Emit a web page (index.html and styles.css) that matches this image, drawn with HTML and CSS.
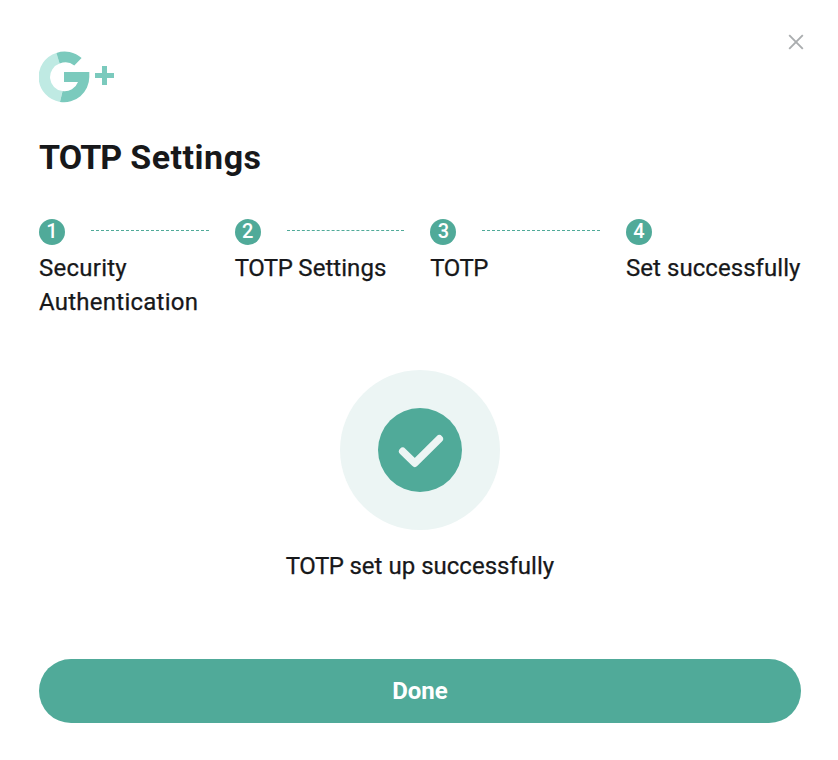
FILE: index.html
```html
<!DOCTYPE html>
<html lang="en">
<head>
    <meta charset="UTF-8">
    <meta name="viewport" content="width=device-width, initial-scale=1.0">
    <title>TOTP Settings</title>
    <link rel="stylesheet" href="styles.css">
</head>
<body>
    <main class="dialog">
        <button class="close" aria-label="Close">
            <svg width="16" height="16" viewBox="0 0 16 16">
                <path d="M1.2 1.2 14.8 14.8M14.8 1.2 1.2 14.8"/>
            </svg>
        </button>

        <!-- Logo -->
        <svg class="logo" width="76" height="52" viewBox="0 0 76 52" role="img" aria-label="G+">
            <path class="logo-light" d="M17.4 1.9A25.2 25.2 0 0 0 21 50.9L23.4 40.1A14.2 14.2 0 0 1 20.6 12.6Z"/>
            <path class="logo-dark" d="M17.4 1.9A25.2 25.2 0 0 1 42.6 7L35.3 14.4A14.2 14.2 0 0 0 20.6 12.6Z"/>
            <path class="logo-dark" d="M25 21H50.3V26A25.2 25.2 0 0 1 21 50.9L23.6 40.1A14.2 14.2 0 0 0 39 31H25Z"/>
            <path class="logo-dark" d="M63 15h5v7h7v5h-7v7h-5v-7h-7v-5h7z"/>
        </svg>

        <h1 class="title"><span class="title-totp">TOTP</span> Settings</h1>

        <!-- Steps -->
        <ol class="steps">
            <li class="step">
                <div class="step-head"><span class="step-number">1</span><span class="step-line"></span></div>
                <p class="step-label label-security">Security<br>Authentication</p>
            </li>
            <li class="step">
                <div class="step-head"><span class="step-number">2</span><span class="step-line"></span></div>
                <p class="step-label"><span class="totp">TOTP</span> Settings</p>
            </li>
            <li class="step">
                <div class="step-head"><span class="step-number">3</span><span class="step-line"></span></div>
                <p class="step-label"><span class="totp">TOTP</span></p>
            </li>
            <li class="step">
                <div class="step-head"><span class="step-number">4</span></div>
                <p class="step-label">Set successfully</p>
            </li>
        </ol>

        <!-- Result -->
        <section class="result">
            <div class="result-halo">
                <div class="result-icon">
                    <svg width="84" height="84" viewBox="0 0 84 84">
                        <path d="M24.7 43.3 36.8 55.2 61.3 30.8"/>
                    </svg>
                </div>
            </div>
            <p class="result-text"><span class="totp">TOTP</span> set up successfully</p>
        </section>

        <button class="done">Done</button>
    </main>
</body>
</html>
```

FILE: styles.css
```css
:root {
    --green: #50aa99;
    --green-pale: #ecf5f4;
    --text: #17181a;
}

* {
    margin: 0;
    padding: 0;
    box-sizing: border-box;
}

body {
    background: #fff;
    color: var(--text);
    font-family: Roboto, "Liberation Sans", sans-serif;
}

.dialog {
    position: relative;
    width: 838px;
    height: 760px;
    padding: 51px 37px 37px 39px;
    display: flex;
    flex-direction: column;
}

button {
    border: none;
    font-family: inherit;
    cursor: pointer;
}

/* Close */
.close {
    position: absolute;
    top: 34px;
    right: 34px;
    width: 16px;
    height: 16px;
    background: none;
}

.close svg {
    display: block;
    fill: none;
    stroke: #aaadaf;
    stroke-width: 1.9;
}

/* Logo and title */
.logo-light {
    fill: #bfeae3;
}

.logo-dark {
    fill: #7bcabd;
}

.title {
    margin-top: 30px;
    font-size: 34px;
    line-height: 48px;
    font-weight: 700;
    letter-spacing: 0.5px;
    white-space: nowrap;
}

.title-totp {
    letter-spacing: -0.9px;
}

/* Steps */
.steps {
    display: flex;
    margin-top: 38px;
    list-style: none;
}

.step {
    flex: 1;
}

.step:last-child {
    flex: 0 0 175px;
}

.step-head {
    display: flex;
    height: 26px;
}

.step-number {
    width: 26px;
    height: 26px;
    border-radius: 50%;
    background: var(--green);
    color: #fff;
    font-size: 20px;
    line-height: 25px;
    font-weight: 500;
    text-align: center;
}

.step-line {
    flex: 1;
    height: 1px;
    margin: 11px 26px 0;
    border-top: 1px dashed var(--green);
}

.step-label {
    margin-top: 6px;
    font-size: 24px;
    line-height: 34px;
    letter-spacing: 0.05px;
    white-space: nowrap;
    -webkit-text-stroke: 0.25px var(--text);
}

.label-security {
    letter-spacing: 0.25px;
}

.totp {
    letter-spacing: -0.5px;
}

/* Result */
.result {
    display: flex;
    flex-direction: column;
    align-items: center;
    margin-top: 51px;
}

.result-halo {
    display: flex;
    align-items: center;
    justify-content: center;
    width: 160px;
    height: 160px;
    border-radius: 50%;
    background: var(--green-pale);
}

.result-icon {
    width: 84px;
    height: 84px;
    border-radius: 50%;
    background: var(--green);
}

.result-icon svg {
    display: block;
    fill: none;
    stroke: var(--green-pale);
    stroke-width: 7.5;
    stroke-linecap: round;
    stroke-linejoin: round;
}

.result-text {
    margin-top: 19px;
    font-size: 24px;
    line-height: 34px;
    letter-spacing: 0.02px;
    -webkit-text-stroke: 0.25px var(--text);
}

.done {
    height: 64px;
    margin-top: auto;
    border-radius: 32px;
    background: var(--green);
    color: #fff;
    font-size: 24px;
    font-weight: 700;
}
```
